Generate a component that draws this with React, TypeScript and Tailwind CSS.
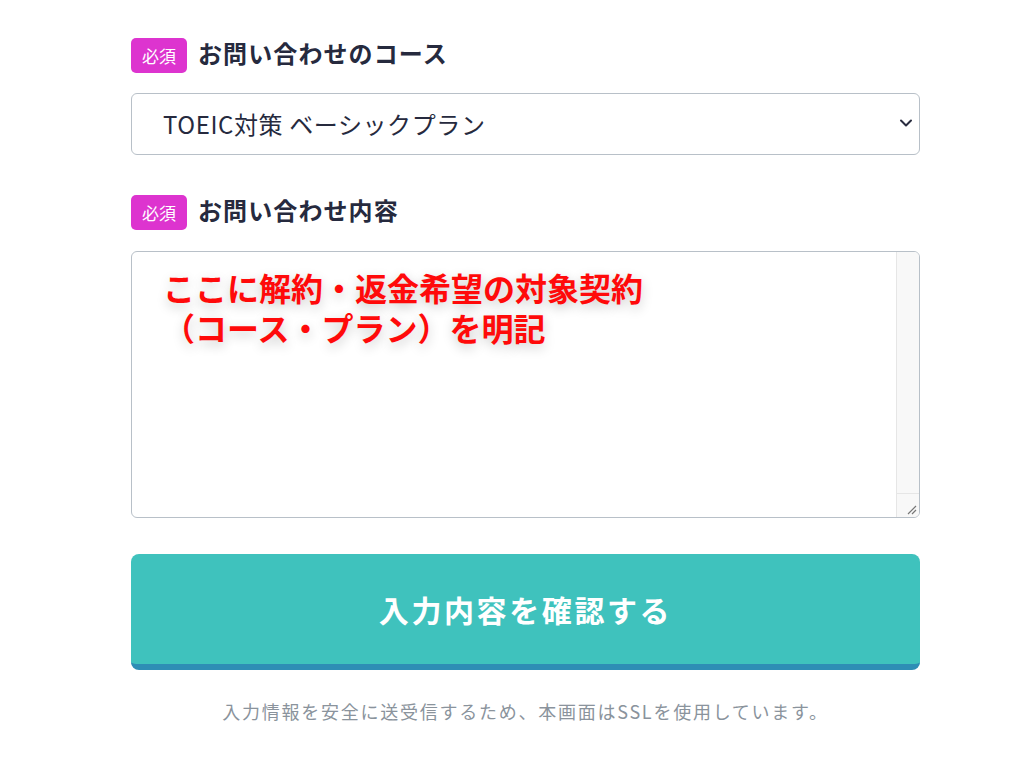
import React, { useState } from "react";

const font = { fontFamily: '"Noto Sans CJK JP", "Noto Sans", sans-serif' };

const Badge: React.FC = () => (
  <span className="flex h-[35px] w-[56px] items-center justify-center rounded-[5px] bg-[#dd34cf] text-[17px] text-white">
    必須
  </span>
);

const FieldLabel: React.FC<{ text: string }> = ({ text }) => (
  <div className="flex items-center gap-[11px]">
    <Badge />
    <span className="pb-[6px] text-[24px] font-bold leading-none tracking-[1.1px] text-[#262a3e]">{text}</span>
  </div>
);

const App: React.FC = () => {
  const [course, setCourse] = useState("basic");
  const [message, setMessage] = useState("");

  return (
    <div className="min-h-[766px] w-[1024px] bg-white pl-[131px] pt-[38px]" style={font}>
      <div className="flex w-[789px] flex-col">
        <FieldLabel text="お問い合わせのコース" />

        <div className="relative mt-[20px]">
          <select
            value={course}
            onChange={(e) => setCourse(e.target.value)}
            className="h-[62px] w-full appearance-none rounded-[6px] border border-[#b8c0c8] bg-white pl-[31px] text-[24px] tracking-[0.6px] text-[#262a3e] outline-none"
            style={font}
          >
            <option value="basic">TOEIC対策 ベーシックプラン</option>
            <option value="standard">TOEIC対策 スタンダードプラン</option>
          </select>
          <svg
            className="pointer-events-none absolute right-[7px] top-[25px]"
            width="14"
            height="10"
            viewBox="0 0 14 10"
            fill="none"
          >
            <path d="M2 2.5l5 5 5-5" stroke="#2a2d40" strokeWidth="2" strokeLinecap="round" strokeLinejoin="round" />
          </svg>
        </div>

        <div className="mt-[40px]">
          <FieldLabel text="お問い合わせ内容" />
        </div>

        <div className="relative mt-[21px] flex h-[267px] overflow-hidden rounded-[6px] border border-[#b8c0c8] bg-white">
          <textarea
            value={message}
            onChange={(e) => setMessage(e.target.value)}
            className="h-full flex-1 resize-none p-[16px] text-[18px] outline-none"
          />
          <div className="flex w-[23px] flex-col border-l border-[#e6e6e6] bg-[#f8f8f8]">
            <div className="flex-1" />
            <div className="flex h-[24px] items-end justify-end border-t border-[#e6e6e6] p-[2px]">
              <svg width="12" height="12" viewBox="0 0 12 12">
                <path d="M11 3L3 11M11 7L7 11" stroke="#777" strokeWidth="1.2" />
              </svg>
            </div>
          </div>
          <div
            className="pointer-events-none absolute left-[31px] top-[18px] text-[32px] font-bold leading-[40px] text-[#ff0a0a]"
            style={{
              fontFamily: '"Liberation Serif", "Noto Sans CJK JP", serif',
              textShadow: "0 4px 12px rgba(0,0,0,0.22)",
            }}
          >
            <div>ここに解約・返金希望の対象契約</div>
            <div>（コース・プラン）を明記</div>
          </div>
        </div>

        <button
          type="button"
          className="mt-[36px] flex h-[116px] w-full items-center justify-center rounded-[8px] border-b-[6px] border-[#2e8db5] bg-[#3fc2bd] text-[30px] font-bold tracking-[2.6px] text-white"
          style={font}
        >
          入力内容を確認する
        </button>

        <p className="mt-[28px] text-center text-[18px] tracking-[1.75px] text-[#8a939c]">
          入力情報を安全に送受信するため、本画面はSSLを使用しています。
        </p>
      </div>
    </div>
  );
};

export default App;
